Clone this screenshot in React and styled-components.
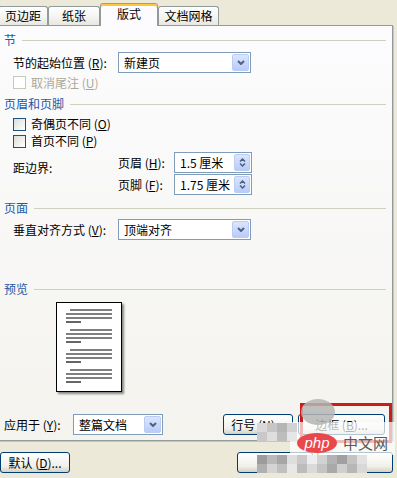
import React from 'react';
import styled, { createGlobalStyle } from 'styled-components';

const font = `"Noto Sans CJK SC", "Liberation Sans", sans-serif`;

const GlobalStyle = createGlobalStyle`
  html, body {
    margin: 0;
    padding: 0;
    background: #ece9d8;
  }
  body {
    font-family: ${font};
    font-size: 12px;
    color: #000;
  }
`;

const Page = styled.div`
  position: relative;
  width: 397px;
  height: 478px;
  overflow: hidden;
  background: #ece9d8;
`;

const TabStrip = styled.div`
  display: flex;
  align-items: flex-end;
  height: 25px;
  margin-left: -2px;
`;

const Tab = styled.div`
  position: relative;
  box-sizing: border-box;
  width: ${p => p.$w}px;
  height: ${p => (p.$active ? 22 : 19)}px;
  display: flex;
  align-items: center;
  justify-content: center;
  font-size: 12px;
  line-height: 14px;
  border: 1px solid #919b9c;
  border-bottom: none;
  border-radius: 3px 3px 0 0;
  background: ${p =>
    p.$active ? '#fcfcfe' : 'linear-gradient(#ffffff, #f3f3ef 60%, #e8e7e0)'};
  ${p =>
    p.$active &&
    `
    z-index: 1;
    margin-bottom: -1px;
    height: 23px;
    border-top: 1px solid #e68b2c;
    box-shadow: inset 0 2px 0 #ffc73c;
    padding-bottom: 2px;
  `}
`;

const Panel = styled.div`
  box-sizing: border-box;
  width: 395px;
  height: 416px;
  margin-left: -2px;
  border: 1px solid #919b9c;
  background: linear-gradient(#fcfcfe, #f4f3ee);
  box-shadow: 1px 1px 0 #c9c6b6;
  padding: 0 0 0 5px;
  display: flex;
  flex-direction: column;
`;

const GroupHeader = styled.div`
  display: flex;
  align-items: center;
  gap: 6px;
  height: 16px;
  margin-top: ${p => p.$top}px;
  margin-right: 6px;
  color: #1f56a5;
  line-height: 16px;

  &::after {
    content: '';
    flex: 1;
    height: 1px;
    background: #d0d0bf;
  }
`;

const Row = styled.div`
  display: flex;
  align-items: center;
  height: ${p => p.$h || 21}px;
  margin-top: ${p => p.$top || 0}px;
  padding-left: ${p => (p.$flush ? 0 : 9)}px;
`;

const Label = styled.span`
  width: ${p => (p.$w ? `${p.$w}px` : 'auto')};
  flex: none;
  white-space: nowrap;
  line-height: 16px;
  color: ${p => (p.$disabled ? '#aca899' : '#000')};
`;

const Key = styled.span`
  text-decoration: underline;
`;

const SelectBox = styled.div`
  box-sizing: border-box;
  width: ${p => p.$w}px;
  height: 21px;
  border: 1px solid #7f9db9;
  background: #fff;
  display: flex;
  align-items: center;
  padding: 1px;
`;

const SelectText = styled.span`
  flex: 1;
  padding-left: 4px;
  line-height: 16px;
  white-space: nowrap;
`;

const DropButton = styled.div`
  box-sizing: border-box;
  width: 17px;
  height: 17px;
  border: 1px solid #bacbf5;
  border-radius: 2px;
  background: linear-gradient(#dbe5fd, #b9cbf7);
  display: flex;
  align-items: center;
  justify-content: center;
`;

const SpinButton = styled(DropButton)`
  flex-direction: column;
  gap: 1px;
  width: 16px;
`;

const Chevron = ({ up }) => (
  <svg width="8" height="5" viewBox="0 0 8 5">
    <path
      d={up ? 'M1 4 L4 1 L7 4' : 'M1 1 L4 4 L7 1'}
      fill="none"
      stroke="#4d6185"
      strokeWidth="2"
    />
  </svg>
);

const SmallChevron = ({ up }) => (
  <svg width="7" height="4" viewBox="0 0 7 4">
    <path
      d={up ? 'M1 3.5 L3.5 1 L6 3.5' : 'M1 0.5 L3.5 3 L6 0.5'}
      fill="none"
      stroke="#4d6185"
      strokeWidth="1.5"
    />
  </svg>
);

const Select = ({ w, children }) => (
  <SelectBox $w={w}>
    <SelectText>{children}</SelectText>
    <DropButton>
      <Chevron />
    </DropButton>
  </SelectBox>
);

const Spin = ({ children }) => (
  <SelectBox $w={78}>
    <SelectText>{children}</SelectText>
    <SpinButton>
      <SmallChevron up />
      <SmallChevron />
    </SpinButton>
  </SelectBox>
);

const CheckBox = styled.span`
  box-sizing: border-box;
  width: 13px;
  height: 13px;
  margin-right: 5px;
  flex: none;
  border: 1px solid ${p => (p.$disabled ? '#cac8bb' : '#1c5180')};
  background: ${p =>
    p.$disabled ? '#fff' : 'linear-gradient(135deg, #dcdcd7, #ffffff)'};
`;

const MarginBlock = styled.div`
  display: flex;
  margin-top: 3px;
  padding-left: 9px;
`;

const MarginLabel = styled.span`
  width: 105px;
  padding-top: 8px;
  line-height: 16px;
`;

const SpinColumn = styled.div`
  display: flex;
  flex-direction: column;
  gap: 1px;
`;

const PreviewPage = styled.div`
  box-sizing: border-box;
  width: 66px;
  height: 90px;
  margin: 5px 0 0 52px;
  border: 1px solid #000;
  background: #fff;
  box-shadow: 2px 2px 2px rgba(0, 0, 0, 0.45);
  flex: none;
`;

const BottomRow = styled.div`
  display: flex;
  align-items: center;
  height: 21px;
  margin-top: 22px;
`;

const Spacer = styled.div`
  width: ${p => p.$w}px;
  flex: none;
`;

const Button = styled.div`
  box-sizing: border-box;
  width: ${p => p.$w}px;
  height: 21px;
  border: 1px solid #003c74;
  border-radius: 3px;
  background: linear-gradient(#ffffff, #f0f0ea 70%, #d6d0c5);
  display: flex;
  align-items: center;
  justify-content: center;
  line-height: 16px;
  white-space: nowrap;
  flex: none;
`;

const Footer = styled.div`
  display: flex;
  align-items: center;
  margin-top: 11px;
  width: 393px;
  gap: 4px;
`;

const Highlight = styled.div`
  position: absolute;
  left: 300px;
  top: 403px;
  width: 92px;
  height: 40px;
  box-sizing: border-box;
  border: 3px solid #cc1b1b;
  pointer-events: none;
`;

const Mosaic = styled.svg`
  position: absolute;
  left: 250px;
  top: 398px;
  pointer-events: none;
`;

const Watermark = styled.div`
  position: absolute;
  left: 297px;
  top: 433px;
  display: flex;
  align-items: center;
  gap: 6px;
`;

const PhpPill = styled.span`
  width: 40px;
  height: 20px;
  border-radius: 50%;
  background: #e9474b;
  color: #fff;
  font-family: "Liberation Sans", sans-serif;
  font-style: italic;
  font-size: 15px;
  line-height: 19px;
  text-align: center;
`;

const CnMark = styled.span`
  color: #5a5a5a;
  font-size: 15px;
  line-height: 20px;
`;

const lines = [0, 20, 40, 60].flatMap(y => [
  [14, 56, y + 8],
  [10, 56, y + 12],
  [10, 56, y + 16],
  [10, 25, y + 20],
]);

const DocLines = () => (
  <svg width="64" height="88" viewBox="0 0 64 88">
    {lines.map(([x1, x2, y], i) => (
      <line key={i} x1={x1 - 1} x2={x2 - 1} y1={y - 1} y2={y - 1} stroke="#000" strokeWidth="1.2" />
    ))}
  </svg>
);

const blocks = [
  [7, 25, '#d9d9d9'], [17, 25, '#c6c6c6'], [27, 25, '#b5b5b5'], [37, 25, '#d2d2d2'],
  [7, 34, '#c8c8c8'], [17, 34, '#dedede'], [27, 34, '#bdbdbd'], [37, 34, '#e6e6e6'],
  [7, 57, '#9c9c9c'], [17, 57, '#b9b9b9'], [27, 57, '#a6a6a6'], [37, 57, '#dedede'],
  [47, 57, '#c9c9c9'], [57, 57, '#eeeeee'], [67, 57, '#d2d2d2'], [77, 57, '#b3b3b3'],
  [87, 57, '#a0a0a0'], [97, 57, '#c3c3c3'], [107, 57, '#e2e2e2'],
  [7, 66, '#b0b0b0'], [17, 66, '#d4d4d4'], [27, 66, '#c0c0c0'], [37, 66, '#e8e8e8'],
  [47, 66, '#bcbcbc'], [57, 66, '#dadada'], [67, 66, '#c4c4c4'], [77, 66, '#a9a9a9'],
  [87, 66, '#cfcfcf'], [97, 66, '#b7b7b7'], [107, 66, '#d8d8d8'],
];

export default function App() {
  return (
    <Page>
      <GlobalStyle />
      <TabStrip>
        <Tab $w={50}>页边距</Tab>
        <Tab $w={52}>纸张</Tab>
        <Tab $w={58} $active>版式</Tab>
        <Tab $w={61}>文档网格</Tab>
      </TabStrip>
      <Panel>
        <GroupHeader $top={6}>节</GroupHeader>
        <Row $top={4}>
          <Label $w={105}>
            节的起始位置 (<Key>R</Key>):
          </Label>
          <Select w={133}>新建页</Select>
        </Row>
        <Row $top={2} $h={15}>
          <CheckBox $disabled />
          <Label $disabled>
            取消尾注 (<Key>U</Key>)
          </Label>
        </Row>

        <GroupHeader $top={6}>页眉和页脚</GroupHeader>
        <Row $top={4} $h={16}>
          <CheckBox />
          <Label>
            奇偶页不同 (<Key>O</Key>)
          </Label>
        </Row>
        <Row $top={1} $h={16}>
          <CheckBox />
          <Label>
            首页不同 (<Key>P</Key>)
          </Label>
        </Row>
        <MarginBlock>
          <MarginLabel>距边界:</MarginLabel>
          <SpinColumn>
            <Row $flush>
              <Label $w={56}>
                页眉 (<Key>H</Key>):
              </Label>
              <Spin>1.5 厘米</Spin>
            </Row>
            <Row $flush>
              <Label $w={56}>
                页脚 (<Key>F</Key>):
              </Label>
              <Spin>1.75 厘米</Spin>
            </Row>
          </SpinColumn>
        </MarginBlock>

        <GroupHeader $top={5}>页面</GroupHeader>
        <Row $top={3}>
          <Label $w={105}>
            垂直对齐方式 (<Key>V</Key>):
          </Label>
          <Select w={133}>顶端对齐</Select>
        </Row>

        <GroupHeader $top={41}>预览</GroupHeader>
        <PreviewPage>
          <DocLines />
        </PreviewPage>

        <BottomRow>
          <Label $w={69}>
            应用于 (<Key>Y</Key>):
          </Label>
          <Select w={90}>整篇文档</Select>
          <Spacer $w={60} />
          <Button $w={70}>
            行号 (<Key>N</Key>)...
          </Button>
          <Spacer $w={5} />
          <Button $w={87}>
            边框 (<Key>B</Key>)...
          </Button>
        </BottomRow>
      </Panel>

      <Footer>
        <Button $w={70}>
          默认 (<Key>D</Key>)...
        </Button>
        <Spacer $w={159} />
        <Button $w={76}>确定</Button>
        <Button $w={76}>取消</Button>
      </Footer>

      <Highlight />
      <Mosaic width="147" height="80" viewBox="0 0 147 80">
        <rect x="40" y="24" width="105" height="33" fill="#ffffff" opacity="0.7" />
        <ellipse cx="68" cy="14" rx="17" ry="13" fill="#b5b5b5" opacity="0.85" />
        {blocks.map(([x, y, c], i) => (
          <rect key={i} x={x} y={y} width="10" height="9" fill={c} />
        ))}
      </Mosaic>
      <Watermark>
        <PhpPill>php</PhpPill>
        <CnMark>中文网</CnMark>
      </Watermark>
    </Page>
  );
}
